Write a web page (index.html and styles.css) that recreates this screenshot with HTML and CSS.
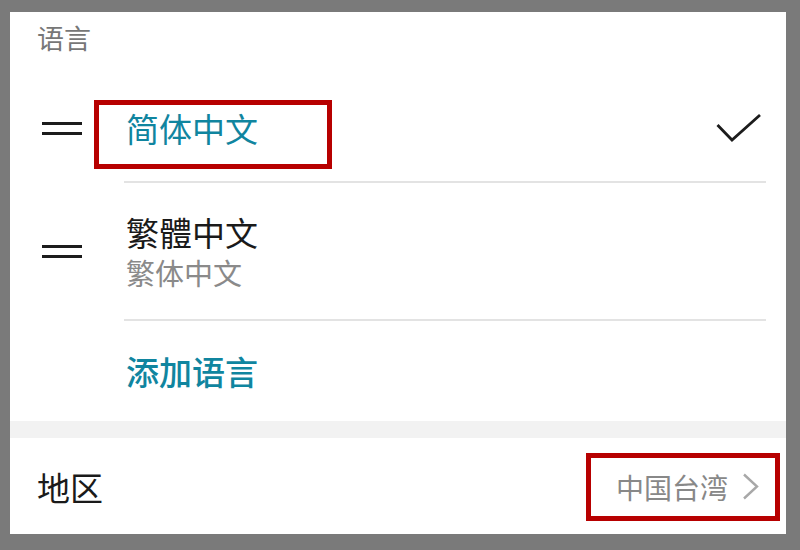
FILE: index.html
```html
<!DOCTYPE html>
<html lang="zh-CN">
<head>
<meta charset="utf-8">
<title>语言与地区</title>
<link rel="stylesheet" href="styles.css">
</head>
<body>
<div class="frame">
  <div class="panel">
    <div class="section-title">语言</div>

    <div class="lang-row row-first">
      <div class="handle"><span></span><span></span></div>
      <div class="row-main">
        <div class="lang-name active">简体中文</div>
        <svg class="check" width="46" height="30" viewBox="0 0 46 30">
          <polyline points="1.5,12 16,27 44,2" fill="none" stroke="#1c1c1c" stroke-width="2.8"/>
        </svg>
      </div>
      <div class="mark mark-lang"></div>
    </div>

    <div class="lang-row row-second">
      <div class="handle"><span></span><span></span></div>
      <div class="row-main">
        <div class="lang-text">
          <div class="lang-name">繁體中文</div>
          <div class="lang-sub">繁体中文</div>
        </div>
      </div>
    </div>

    <div class="lang-row row-add">
      <div class="handle-space"></div>
      <div class="row-main no-border">
        <div class="add-lang">添加语言</div>
      </div>
    </div>

    <div class="band"></div>

    <div class="region-row">
      <div class="region-label">地区</div>
      <div class="region-value">
        <span>中国台湾</span>
        <svg class="chevron" width="18" height="28" viewBox="0 0 18 28">
          <polyline points="2,1.5 15,13.5 2,25.5" fill="none" stroke="#a8a8a8" stroke-width="2.4"/>
        </svg>
      </div>
      <div class="mark mark-region"></div>
    </div>
  </div>
</div>
</body>
</html>
```

FILE: styles.css
```css
* { box-sizing: border-box; }

html, body {
  margin: 0;
  padding: 0;
}

body {
  font-family: "Noto Sans CJK SC", "Noto Sans", sans-serif;
  background: #7a7a7a;
}

.frame {
  width: 800px;
  height: 550px;
  padding: 12px 14px 16px 10px;
  background: #7a7a7a;
}

.panel {
  background: #ffffff;
  height: 522px;
  display: flex;
  flex-direction: column;
}

.section-title {
  height: 62px;
  padding: 12px 0 0 27px;
  font-size: 27px;
  line-height: 27px;
  color: #777777;
}

.lang-row {
  position: relative;
  display: flex;
  align-items: stretch;
}

.handle,
.handle-space {
  width: 114px;
  flex: 0 0 114px;
  padding-left: 32px;
  display: flex;
  flex-direction: column;
  justify-content: center;
  gap: 7px;
}

.handle span {
  display: block;
  width: 40px;
  height: 3px;
  background: #1c1c1c;
}

.row-main {
  flex: 1;
  margin-right: 20px;
  padding-left: 2px;
  border-bottom: 2px solid #e3e3e3;
  display: flex;
  align-items: center;
  justify-content: space-between;
}

.row-main.no-border {
  border-bottom: none;
}

.row-first .row-main { height: 109px; }
.row-second .row-main { height: 138px; padding-top: 8px; }
.row-second .handle { padding-bottom: 2px; }
.row-add .row-main { height: 100px; }

.lang-text {
  font-family: "Liberation Sans", "Noto Sans CJK SC", sans-serif;
}

.lang-name {
  font-size: 33px;
  line-height: 40px;
  color: #1a1a1a;
}

.lang-name.active {
  color: #10859f;
}

.lang-sub {
  font-size: 29px;
  line-height: 41px;
  color: #8a8a8a;
}

.check {
  display: block;
  margin-right: 4px;
}

.add-lang {
  font-size: 33px;
  line-height: 40px;
  color: #10859f;
  font-weight: 500;
}

.band {
  height: 17px;
  background: #f2f2f2;
}

.region-row {
  position: relative;
  flex: 1;
  display: flex;
  align-items: center;
  justify-content: space-between;
  padding: 2px 26px 0 27px;
}

.region-label {
  font-size: 33px;
  line-height: 40px;
  color: #1a1a1a;
}

.region-value {
  display: flex;
  align-items: center;
  gap: 14px;
  font-size: 28px;
  line-height: 40px;
  color: #888888;
}

.chevron {
  display: block;
}

.mark {
  position: absolute;
  border: 5px solid #b70000;
  pointer-events: none;
}

.mark-lang {
  left: 84px;
  top: 26px;
  width: 238px;
  height: 69px;
}

.mark-region {
  left: 576px;
  top: 15px;
  width: 194px;
  height: 68px;
}
```
